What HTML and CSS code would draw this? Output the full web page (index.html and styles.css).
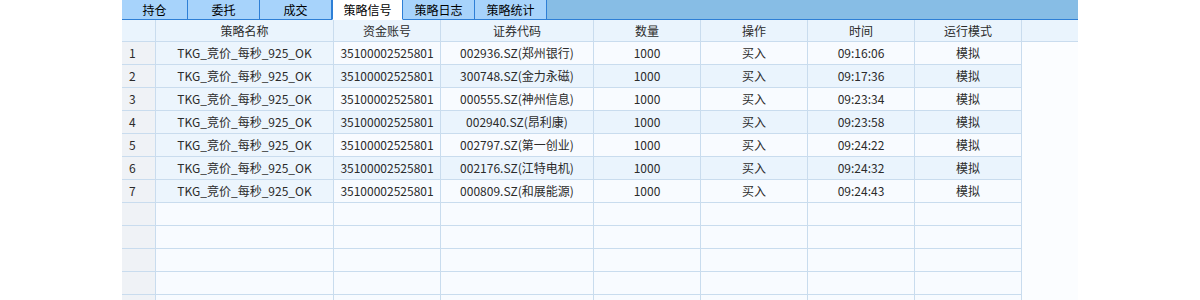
FILE: index.html
```html
<!DOCTYPE html>
<html lang="zh-CN">
<head>
  <meta charset="UTF-8" />
  <title>策略信号</title>
  <link rel="stylesheet" href="styles.css">
</head>
<body>

  <div class="panel">
    <div class="tabs">
      <div class="tab first">持仓</div>
      <div class="tab">委托</div>
      <div class="tab">成交</div>
      <div class="tab active">策略信号</div>
      <div class="tab">策略日志</div>
      <div class="tab">策略统计</div>
    </div>

    <div class="grid">
      <div class="row head">
        <div class="cell num"></div>
        <div class="cell">策略名称</div>
        <div class="cell">资金账号</div>
        <div class="cell">证券代码</div>
        <div class="cell">数量</div>
        <div class="cell">操作</div>
        <div class="cell">时间</div>
        <div class="cell">运行模式</div>
        <div class="cell rest"></div>
      </div>
      <div id="rows"></div>
    </div>
  </div>

  <script>
    var signals = [
      ['002936.SZ(郑州银行)', '09:16:06'],
      ['300748.SZ(金力永磁)', '09:17:36'],
      ['000555.SZ(神州信息)', '09:23:34'],
      ['002940.SZ(昂利康)', '09:23:58'],
      ['002797.SZ(第一创业)', '09:24:22'],
      ['002176.SZ(江特电机)', '09:24:32'],
      ['000809.SZ(和展能源)', '09:24:43']
    ];

    var html = '';
    for (var i = 0; i < 12; i++) {
      var s = signals[i];
      var cls = 'row' + (i % 2 ? ' even' : '') + (s ? '' : ' blank');
      html += '<div class="' + cls + '">';
      html += '<div class="cell num">' + (s ? i + 1 : '') + '</div>';
      html += '<div class="cell name">' + (s ? 'TKG_竞价_每秒_925_OK' : '') + '</div>';
      html += '<div class="cell">' + (s ? '35100002525801' : '') + '</div>';
      html += '<div class="cell">' + (s ? s[0] : '') + '</div>';
      html += '<div class="cell">' + (s ? '1000' : '') + '</div>';
      html += '<div class="cell">' + (s ? '买入' : '') + '</div>';
      html += '<div class="cell">' + (s ? s[1] : '') + '</div>';
      html += '<div class="cell">' + (s ? '模拟' : '') + '</div>';
      html += '<div class="cell rest"></div>';
      html += '</div>';
    }
    document.getElementById('rows').innerHTML = html;
  </script>

</body>
</html>
```

FILE: styles.css
```css
* {
  box-sizing: border-box;
  margin: 0;
  padding: 0;
}

body {
  background: #ffffff;
  font-family: "Noto Sans CJK SC", "Noto Sans", sans-serif;
  font-size: 12px;
  color: #2b2b2b;
  overflow: hidden;
}

.panel {
  margin-left: 122px;
  width: 956px;
}

/* tab strip */
.tabs {
  display: flex;
  height: 20px;
  background: #87bde5;
  border-bottom: 1px solid #2e7fd6;
}

.tab {
  width: 72px;
  height: 20px;
  line-height: 19px;
  text-align: center;
  font-size: 12px;
  color: #000;
  background: #a7d3fb;
  border-right: 1px solid #2e7fd6;
  border-bottom: 1px solid #2e7fd6;
}

.tab.first {
  width: 66px;
}

.tab.active {
  width: 71px;
  background: #ffffff;
  border-left: 1px solid #2e7fd6;
  border-bottom-color: #ffffff;
}

/* signal grid */
.row {
  display: grid;
  grid-template-columns: 34px 178px 107px 153px 107px 107px 107px 107px 56px;
  height: 23px;
  background: #f8fbff;
}

.row.even {
  background: #eaf4fd;
}

.row.blank {
  background: #f8fbff;
}

.row.head {
  height: 22px;
  background: #eaf4fd;
}

.cell {
  border-right: 1px solid #c9dcee;
  border-bottom: 1px solid #c9dcee;
  text-align: center;
  line-height: 22px;
  white-space: nowrap;
  overflow: hidden;
}

.head .cell {
  line-height: 21px;
}

.cell.num {
  text-align: left;
  padding-left: 7px;
  background: #eff2f6;
}

.head .cell.num {
  background: #eaf4fd;
}

.cell.name {
  background: #ecf5fd;
}

.blank .cell.name {
  background: #f8fbff;
}

.cell.rest {
  border-right: none;
  border-bottom: none;
  background: #fbfdff;
}

.head .cell.rest {
  border-bottom: 1px solid #c9dcee;
  background: #eaf4fd;
}
```
